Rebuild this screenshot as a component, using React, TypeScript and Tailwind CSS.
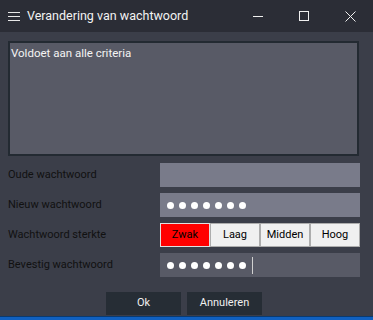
import React from "react";

const font = { fontFamily: 'Roboto, "Liberation Sans", sans-serif' };

function Dots({ n }: { n: number }) {
  return (
    <div className="flex items-center gap-[5px] pl-[7px]">
      {Array.from({ length: n }).map((_, i) => (
        <span key={i} className="block w-[7px] h-[7px] rounded-full bg-white" />
      ))}
    </div>
  );
}

export default function App() {
  return (
    <div className="w-[373px] h-[320px] flex flex-col bg-[#3b3e49] overflow-hidden" style={font}>
      {/* Title bar */}
      <div className="h-[32px] shrink-0 bg-[#2b2d36] flex items-center text-white">
        <svg width="12" height="9" viewBox="0 0 12 9" className="ml-[8px]">
          <line x1="0" y1="0.5" x2="12" y2="0.5" stroke="#e8e8e8" strokeWidth="1" />
          <line x1="0" y1="4.5" x2="12" y2="4.5" stroke="#e8e8e8" strokeWidth="1" />
          <line x1="0" y1="8.5" x2="12" y2="8.5" stroke="#e8e8e8" strokeWidth="1" />
        </svg>
        <span className="ml-[7px] text-[12.5px] text-[#f2f2f2] leading-none">Verandering van wachtwoord</span>
        <div className="ml-auto flex items-center">
          <div className="w-[46px] h-[32px] flex items-center justify-center">
            <svg width="10" height="10" viewBox="0 0 10 10">
              <line x1="0" y1="5.5" x2="10" y2="5.5" stroke="#f0f0f0" strokeWidth="1" />
            </svg>
          </div>
          <div className="w-[46px] h-[32px] flex items-center justify-center">
            <svg width="10" height="10" viewBox="0 0 10 10">
              <rect x="0.5" y="0.5" width="9" height="9" fill="none" stroke="#f0f0f0" strokeWidth="1" />
            </svg>
          </div>
          <div className="w-[46px] h-[32px] flex items-center justify-center">
            <svg width="11" height="11" viewBox="0 0 11 11">
              <line x1="0.5" y1="0.5" x2="10.5" y2="10.5" stroke="#f0f0f0" strokeWidth="1" />
              <line x1="10.5" y1="0.5" x2="0.5" y2="10.5" stroke="#f0f0f0" strokeWidth="1" />
            </svg>
          </div>
        </div>
      </div>

      {/* Body */}
      <div className="flex-1 flex flex-col px-[8px] pt-[9px] text-[11px]">
        <div className="w-[351px] h-[115px] border-2 border-[#232a32] bg-[#585a66] px-[1px] pt-[4px] text-[11.5px] leading-[13px] text-[#f4f4f4]">
          Voldoet aan alle criteria
        </div>

        <div className="mt-[7px] grid grid-cols-[152px_200px] gap-y-[6px] text-[#111111]">
          <div className="h-[24px] flex items-center">Oude wachtwoord</div>
          <div className="h-[24px] bg-[#797b8a]" />

          <div className="h-[24px] flex items-center">Nieuw wachtwoord</div>
          <div className="h-[24px] bg-[#797b8a] flex items-center">
            <Dots n={7} />
          </div>

          <div className="h-[24px] flex items-center">Wachtwoord sterkte</div>
          <div className="h-[24px] grid grid-cols-4 text-black">
            <div className="border border-[#e0e0e0] bg-[#ff0000] flex items-center justify-center">Zwak</div>
            <div className="border border-[#adadad] bg-[#f0f0f0] flex items-center justify-center">Laag</div>
            <div className="border border-[#adadad] bg-[#f0f0f0] flex items-center justify-center">Midden</div>
            <div className="border border-[#adadad] bg-[#f0f0f0] flex items-center justify-center">Hoog</div>
          </div>

          <div className="h-[24px] flex items-center">Bevestig wachtwoord</div>
          <div className="h-[24px] bg-[#585a66] flex items-center">
            <Dots n={7} />
            <span className="block w-px h-[17px] bg-[#d0d0d0] ml-[6px]" />
          </div>
        </div>

        <div className="mt-[15px] flex justify-center gap-[6px] pr-[5px] text-[#f0f0f0]">
          <div className="w-[75px] h-[23px] bg-[#262d35] flex items-center justify-center">Ok</div>
          <div className="w-[75px] h-[23px] bg-[#262d35] flex items-center justify-center">Annuleren</div>
        </div>
      </div>
      <div className="h-[4px] shrink-0 bg-[#1060c0] border-t border-[#0a3a70]" />
    </div>
  );
}
